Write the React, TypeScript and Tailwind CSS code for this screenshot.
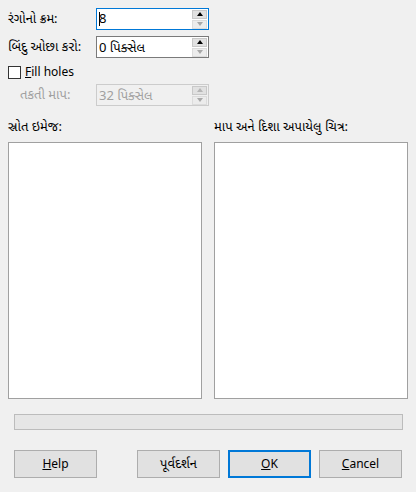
import React from 'react';

const font = { fontFamily: '"Noto Sans", "Noto Sans Gujarati", "Liberation Sans", sans-serif' };

function Spin({ disabled }: { disabled?: boolean }) {
  const up = disabled ? 'border-b-[#b5b5b5]' : 'border-b-black';
  return (
    <div className="flex flex-col gap-[1px] mr-[1px]">
      <div className="w-[15px] h-[9px] bg-[#e1e1e1] border border-[#c8c8c8] flex items-center justify-center">
        <div className={`w-0 h-0 border-x-[3.5px] border-x-transparent border-b-[4px] ${up}`} />
      </div>
      <div className="w-[15px] h-[9px] bg-[#ececec] border border-[#dcdcdc] flex items-center justify-center">
        <div className="w-0 h-0 border-x-[3.5px] border-x-transparent border-t-[4px] border-t-[#a8a8a8]" />
      </div>
    </div>
  );
}

function Field({ value, state }: { value: string; state: 'focus' | 'normal' | 'disabled' }) {
  const border =
    state === 'focus' ? 'border-[#0078d7] bg-white' : state === 'normal' ? 'border-[#7a7a7a] bg-white' : 'border-[#cccccc] bg-[#f0f0f0]';
  const text = state === 'disabled' ? 'text-[#a0a0a0]' : 'text-black';
  return (
    <div className={`w-[113px] h-[22px] border flex items-center justify-between ${border}`}>
      <span className={`pl-[2px] text-[13px] leading-none ${text}`}>
        {state === 'focus' && <span className="inline-block w-[1px] h-[14px] bg-black align-middle -mr-[1px]" />}
        {value}
      </span>
      <Spin disabled={state === 'disabled'} />
    </div>
  );
}

function Btn({ children, primary }: { children: React.ReactNode; primary?: boolean }) {
  return (
    <button
      className={`w-[83px] h-[28px] bg-[#e1e1e1] text-[12px] text-black flex items-center justify-center ${
        primary ? 'border-2 border-[#0078d7]' : 'border border-[#adadad]'
      }`}
    >
      {children}
    </button>
  );
}

export default function App() {
  return (
    <div className="w-[416px] h-[492px] bg-[#f0f0f0] text-[12px] text-black flex flex-col" style={font}>
      <div className="pt-[8px] px-[8px] flex flex-col">
        <div className="flex items-center h-[22px]">
          <span className="w-[88px] text-[13px]">રંગોનો ક્રમ:</span>
          <Field value="8" state="focus" />
        </div>
        <div className="flex items-center h-[22px] mt-[6px]">
          <span className="w-[88px] text-[13px]">બિંદુ ઓછા કરો:</span>
          <Field value="0 પિક્સેલ" state="normal" />
        </div>
        <div className="flex items-center h-[18px] mt-[5px] gap-[4px]">
          <div className="w-[13px] h-[13px] border border-[#333333] bg-white" />
          <span>
            <span className="underline">F</span>ill holes
          </span>
        </div>
        <div className="flex items-center h-[22px] mt-[3px]">
          <span className="w-[88px] pl-[12px] text-[13px] text-[#a0a0a0]">તકતી માપ:</span>
          <Field value="32 પિક્સેલ" state="disabled" />
        </div>
      </div>

      <div className="px-[8px] mt-[10px] grid grid-cols-2 gap-x-[12px] text-[13px]">
        <div className="flex flex-col">
          <span className="h-[20px] leading-[20px]">સ્રોત ઇમેજ:</span>
          <div className="mt-[6px] h-[257px] bg-white border border-[#a0a0a0]" />
        </div>
        <div className="flex flex-col">
          <span className="h-[20px] leading-[20px]">માપ અને દિશા અપાયેલુ ચિત્ર:</span>
          <div className="mt-[6px] h-[257px] bg-white border border-[#a0a0a0]" />
        </div>
      </div>

      <div className="ml-[14px] mr-[13px] mt-[15px] h-[16px] bg-[#e6e6e6] border border-[#bcbcbc]" />

      <div className="flex items-center mt-[20px] pl-[14px] pr-[14px]">
        <Btn>
          <span>
            <span className="underline">H</span>elp
          </span>
        </Btn>
        <div className="flex gap-[8px] ml-auto">
          <Btn>
            <span className="text-[13px]">પૂર્વદર્શન</span>
          </Btn>
          <Btn primary>
            <span>
              <span className="underline">O</span>K
            </span>
          </Btn>
          <Btn>
            <span>
              <span className="underline">C</span>ancel
            </span>
          </Btn>
        </div>
      </div>
    </div>
  );
}
